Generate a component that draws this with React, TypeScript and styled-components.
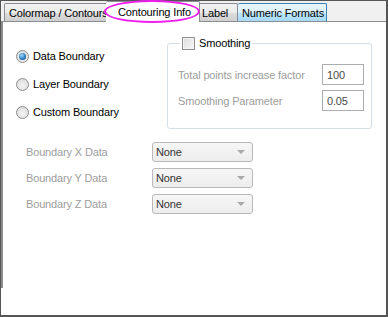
import React from 'react';
import styled, { createGlobalStyle } from 'styled-components';

const GlobalStyle = createGlobalStyle`
  html, body {
    margin: 0;
    padding: 0;
    background: #ffffff;
  }
  * {
    box-sizing: border-box;
  }
`;

const tabs = [
  { label: 'Colormap / Contours', width: 104 },
  { label: 'Contouring Info', width: 90, active: true },
  { label: 'Label', width: 40 },
  { label: 'Numeric Formats', width: 89, hover: true },
];

const radios = [
  { label: 'Data Boundary', checked: true },
  { label: 'Layer Boundary' },
  { label: 'Custom Boundary' },
];

const smoothingFields = [
  { label: 'Total points increase factor', value: '100' },
  { label: 'Smoothing Parameter', value: '0.05' },
];

const boundaryRows = ['Boundary X Data', 'Boundary Y Data', 'Boundary Z Data'];

export default function App() {
  return (
    <>
      <GlobalStyle />
      <Frame>
        <TabStrip>
          {tabs.map(tab => (
            <Tab
              key={tab.label}
              $width={tab.width}
              $active={!!tab.active}
              $hover={!!tab.hover}
            >
              {tab.label}
            </Tab>
          ))}
          <Highlight />
        </TabStrip>

        <Panel>
          <TopSection>
            <RadioColumn>
              {radios.map(r => (
                <RadioRow key={r.label}>
                  <RadioCircle $checked={!!r.checked} />
                  {r.label}
                </RadioRow>
              ))}
            </RadioColumn>

            <GroupBox>
              <Legend>
                <CheckBox />
                Smoothing
              </Legend>
              {smoothingFields.map(f => (
                <FieldRow key={f.label}>
                  <DisabledLabel>{f.label}</DisabledLabel>
                  <TextBox>{f.value}</TextBox>
                </FieldRow>
              ))}
            </GroupBox>
          </TopSection>

          <BoundarySection>
            {boundaryRows.map(label => (
              <BoundaryRow key={label}>
                <BoundaryLabel>{label}</BoundaryLabel>
                <Dropdown>
                  None
                  <Arrow />
                </Dropdown>
              </BoundaryRow>
            ))}
          </BoundarySection>
        </Panel>
      </Frame>
    </>
  );
}

const Frame = styled.div`
  position: relative;
  width: 388px;
  height: 317px;
  border: 1px solid #555555;
  border-right-width: 2px;
  border-bottom-width: 2px;
  background: #ffffff;
  font-family: 'Liberation Sans', Arial, sans-serif;
  font-size: 11px;
  letter-spacing: -0.15px;
  color: #000000;
`;

const TabStrip = styled.div`
  position: relative;
  display: flex;
  align-items: flex-end;
  height: 21px;
  padding-left: 3px;
  background: #f0f0f0;
  border-bottom: 1px solid #898c95;
`;

const Tab = styled.div<{ $width: number; $active: boolean; $hover: boolean }>`
  position: relative;
  display: flex;
  align-items: center;
  width: ${({ $width, $active }) => ($active ? $width + 4 : $width)}px;
  height: ${({ $active }) => ($active ? 21 : 18)}px;
  margin: ${({ $active }) => ($active ? '0 -2px -1px -2px' : '0')};
  padding-left: ${({ $active }) => ($active ? 12 : 4)}px;
  border: 1px solid ${({ $hover }) => ($hover ? '#3c7fb1' : '#898c95')};
  border-bottom: ${({ $active }) => ($active ? 'none' : '0')};
  border-radius: 2px 2px 0 0;
  z-index: ${({ $active }) => ($active ? 1 : 0)};
  padding-top: ${({ $active }) => ($active ? 0 : 1)}px;
  white-space: nowrap;
  background: ${({ $active, $hover }) =>
    $active
      ? '#ffffff'
      : $hover
      ? 'linear-gradient(#eaf6fd, #d9f0fc 50%, #bee6fd 51%, #a7d9f5)'
      : 'linear-gradient(#f2f2f2, #ebebeb 50%, #dddddd 51%, #cfcfcf)'};
  & + & {
    border-left-width: ${({ $active }) => ($active ? 1 : 0)}px;
  }
`;

const Highlight = styled.div`
  position: absolute;
  left: 103px;
  top: -1px;
  width: 96px;
  height: 23px;
  border: 2px solid #f01ef0;
  border-radius: 50%;
  z-index: 2;
  pointer-events: none;
`;

const Panel = styled.div`
  display: flex;
  flex-direction: column;
  height: 266px;
  padding: 20px 0 0 13px;
  border-left: 2px solid #8a8a8a;
`;

const TopSection = styled.div`
  display: flex;
  align-items: flex-start;
`;

const RadioColumn = styled.div`
  display: flex;
  flex-direction: column;
  width: 151px;
`;

const RadioRow = styled.div`
  display: flex;
  align-items: center;
  gap: 4px;
  height: 28px;
`;

const RadioCircle = styled.span<{ $checked: boolean }>`
  position: relative;
  width: 13px;
  height: 13px;
  border-radius: 50%;
  border: 1px solid #8d8d8d;
  background: radial-gradient(circle at 50% 60%, #f4f4f4, #d6d6d6);
  flex: none;
  &::after {
    content: '';
    display: ${({ $checked }) => ($checked ? 'block' : 'none')};
    position: absolute;
    left: 2px;
    top: 2px;
    width: 7px;
    height: 7px;
    border-radius: 50%;
    background: radial-gradient(circle at 40% 35%, #a8dcfb, #2a7ec0 55%, #0e3f6e);
  }
`;

const GroupBox = styled.div`
  display: flex;
  flex-direction: column;
  gap: 5px;
  width: 205px;
  height: 86px;
  margin-top: 1px;
  padding: 0 7px 0 10px;
  border: 1px solid #d5dfe5;
  border-radius: 3px;
`;

const Legend = styled.div`
  display: flex;
  align-items: center;
  gap: 4px;
  align-self: flex-start;
  height: 14px;
  margin: -8px 0 9px 2px;
  padding: 0 2px;
  background: #ffffff;
`;

const CheckBox = styled.span`
  width: 13px;
  height: 13px;
  border: 1px solid #8f8f8f;
  background: linear-gradient(135deg, #dcdcdc, #f8f8f8);
  box-shadow: inset 0 0 0 1px #f4f4f4;
  flex: none;
`;

const FieldRow = styled.div`
  display: flex;
  align-items: center;
  justify-content: space-between;
  height: 21px;
`;

const DisabledLabel = styled.span`
  color: #9d9d9d;
  white-space: nowrap;
`;

const TextBox = styled.div`
  display: flex;
  align-items: center;
  width: 42px;
  height: 21px;
  padding-left: 4px;
  border: 1px solid #abadb3;
  color: #4a4a4a;
  background: #ffffff;
`;

const BoundarySection = styled.div`
  display: flex;
  flex-direction: column;
  gap: 6px;
  margin-top: 13px;
  padding-left: 10px;
`;

const BoundaryRow = styled.div`
  display: flex;
  align-items: center;
  height: 20px;
`;

const BoundaryLabel = styled.span`
  width: 126px;
  color: #9d9d9d;
  white-space: nowrap;
`;

const Dropdown = styled.div`
  position: relative;
  display: flex;
  align-items: center;
  width: 101px;
  height: 20px;
  padding-left: 3px;
  border: 1px solid #b9b9b9;
  border-radius: 3px;
  background: linear-gradient(#f6f6f6, #ededed);
  color: #333333;
`;

const Arrow = styled.span`
  position: absolute;
  right: 7px;
  top: 7px;
  width: 0;
  height: 0;
  border-left: 4px solid transparent;
  border-right: 4px solid transparent;
  border-top: 4px solid #a8a8a8;
`;
